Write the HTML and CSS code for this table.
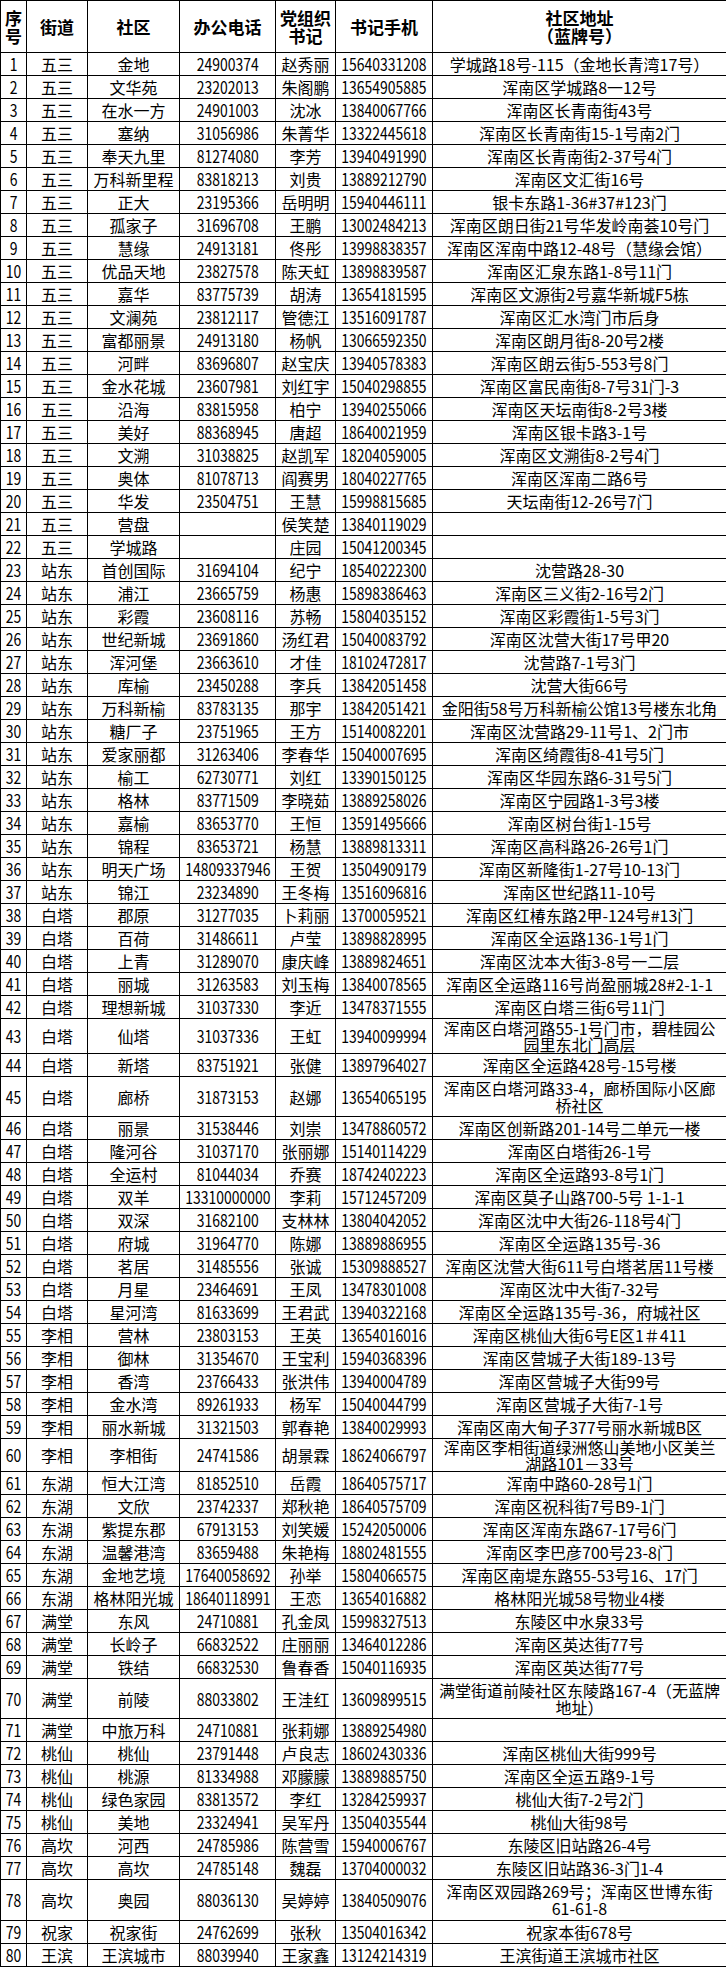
FILE: index.html
```html
<!DOCTYPE html>
<html lang="zh-CN">
<head>
<meta charset="utf-8">
<title>社区联系表</title>
<link rel="stylesheet" href="styles.css">
</head>
<body>
<table class="sheet">
<colgroup>
<col class="c-no"><col class="c-street"><col class="c-comm"><col class="c-tel"><col class="c-sec"><col class="c-mob"><col class="c-addr">
</colgroup>
<thead>
<tr><th>序<br>号</th><th>街道</th><th>社区</th><th>办公电话</th><th>党组织<br>书记</th><th>书记手机</th><th>社区地址<br>（蓝牌号）</th></tr>
</thead>
<tbody>
<tr><td class="n"><span>1</span></td><td>五三</td><td>金地</td><td class="n"><span>24900374</span></td><td>赵秀丽</td><td class="n"><span>15640331208</span></td><td>学城路18号-115（金地长青湾17号）</td></tr>
<tr><td class="n"><span>2</span></td><td>五三</td><td>文华苑</td><td class="n"><span>23202013</span></td><td>朱阁鹏</td><td class="n"><span>13654905885</span></td><td>浑南区学城路8一12号</td></tr>
<tr><td class="n"><span>3</span></td><td>五三</td><td>在水一方</td><td class="n"><span>24901003</span></td><td>沈冰</td><td class="n"><span>13840067766</span></td><td>浑南区长青南街43号</td></tr>
<tr><td class="n"><span>4</span></td><td>五三</td><td>塞纳</td><td class="n"><span>31056986</span></td><td>朱菁华</td><td class="n"><span>13322445618</span></td><td>浑南区长青南街15-1号南2门</td></tr>
<tr><td class="n"><span>5</span></td><td>五三</td><td>奉天九里</td><td class="n"><span>81274080</span></td><td>李芳</td><td class="n"><span>13940491990</span></td><td>浑南区长青南街2-37号4门</td></tr>
<tr><td class="n"><span>6</span></td><td>五三</td><td>万科新里程</td><td class="n"><span>83818213</span></td><td>刘贵</td><td class="n"><span>13889212790</span></td><td>浑南区文汇街16号</td></tr>
<tr><td class="n"><span>7</span></td><td>五三</td><td>正大</td><td class="n"><span>23195366</span></td><td>岳明明</td><td class="n"><span>15940446111</span></td><td>银卡东路1-36#37#123门</td></tr>
<tr><td class="n"><span>8</span></td><td>五三</td><td>孤家子</td><td class="n"><span>31696708</span></td><td>王鹏</td><td class="n"><span>13002484213</span></td><td>浑南区朗日街21号华发岭南荟10号门</td></tr>
<tr><td class="n"><span>9</span></td><td>五三</td><td>慧缘</td><td class="n"><span>24913181</span></td><td>佟彤</td><td class="n"><span>13998838357</span></td><td>浑南区浑南中路12-48号（慧缘会馆）</td></tr>
<tr><td class="n"><span>10</span></td><td>五三</td><td>优品天地</td><td class="n"><span>23827578</span></td><td>陈天虹</td><td class="n"><span>13898839587</span></td><td>浑南区汇泉东路1-8号11门</td></tr>
<tr><td class="n"><span>11</span></td><td>五三</td><td>嘉华</td><td class="n"><span>83775739</span></td><td>胡涛</td><td class="n"><span>13654181595</span></td><td>浑南区文源街2号嘉华新城F5栋</td></tr>
<tr><td class="n"><span>12</span></td><td>五三</td><td>文澜苑</td><td class="n"><span>23812117</span></td><td>管德江</td><td class="n"><span>13516091787</span></td><td>浑南区汇水湾门市后身</td></tr>
<tr><td class="n"><span>13</span></td><td>五三</td><td>富都丽景</td><td class="n"><span>24913180</span></td><td>杨帆</td><td class="n"><span>13066592350</span></td><td>浑南区朗月街8-20号2楼</td></tr>
<tr><td class="n"><span>14</span></td><td>五三</td><td>河畔</td><td class="n"><span>83696807</span></td><td>赵宝庆</td><td class="n"><span>13940578383</span></td><td>浑南区朗云街5-553号8门</td></tr>
<tr><td class="n"><span>15</span></td><td>五三</td><td>金水花城</td><td class="n"><span>23607981</span></td><td>刘红宇</td><td class="n"><span>15040298855</span></td><td>浑南区富民南街8-7号31门-3</td></tr>
<tr><td class="n"><span>16</span></td><td>五三</td><td>沿海</td><td class="n"><span>83815958</span></td><td>柏宁</td><td class="n"><span>13940255066</span></td><td>浑南区天坛南街8-2号3楼</td></tr>
<tr><td class="n"><span>17</span></td><td>五三</td><td>美好</td><td class="n"><span>88368945</span></td><td>唐超</td><td class="n"><span>18640021959</span></td><td>浑南区银卡路3-1号</td></tr>
<tr><td class="n"><span>18</span></td><td>五三</td><td>文溯</td><td class="n"><span>31038825</span></td><td>赵凯军</td><td class="n"><span>18204059005</span></td><td>浑南区文溯街8-2号4门</td></tr>
<tr><td class="n"><span>19</span></td><td>五三</td><td>奥体</td><td class="n"><span>81078713</span></td><td>阎赛男</td><td class="n"><span>18040227765</span></td><td>浑南区浑南二路6号</td></tr>
<tr><td class="n"><span>20</span></td><td>五三</td><td>华发</td><td class="n"><span>23504751</span></td><td>王慧</td><td class="n"><span>15998815685</span></td><td>天坛南街12-26号7门</td></tr>
<tr><td class="n"><span>21</span></td><td>五三</td><td>营盘</td><td class="n"></td><td>侯笑楚</td><td class="n"><span>13840119029</span></td><td></td></tr>
<tr><td class="n"><span>22</span></td><td>五三</td><td>学城路</td><td class="n"></td><td>庄园</td><td class="n"><span>15041200345</span></td><td></td></tr>
<tr><td class="n"><span>23</span></td><td>站东</td><td>首创国际</td><td class="n"><span>31694104</span></td><td>纪宁</td><td class="n"><span>18540222300</span></td><td>沈营路28-30</td></tr>
<tr><td class="n"><span>24</span></td><td>站东</td><td>浦江</td><td class="n"><span>23665759</span></td><td>杨惠</td><td class="n"><span>15898386463</span></td><td>浑南区三义街2-16号2门</td></tr>
<tr><td class="n"><span>25</span></td><td>站东</td><td>彩霞</td><td class="n"><span>23608116</span></td><td>苏畅</td><td class="n"><span>15804035152</span></td><td>浑南区彩霞街1-5号3门</td></tr>
<tr><td class="n"><span>26</span></td><td>站东</td><td>世纪新城</td><td class="n"><span>23691860</span></td><td>汤红君</td><td class="n"><span>15040083792</span></td><td>浑南区沈营大街17号甲20</td></tr>
<tr><td class="n"><span>27</span></td><td>站东</td><td>浑河堡</td><td class="n"><span>23663610</span></td><td>才佳</td><td class="n"><span>18102472817</span></td><td>沈营路7-1号3门</td></tr>
<tr><td class="n"><span>28</span></td><td>站东</td><td>库榆</td><td class="n"><span>23450288</span></td><td>李兵</td><td class="n"><span>13842051458</span></td><td>沈营大街66号</td></tr>
<tr><td class="n"><span>29</span></td><td>站东</td><td>万科新榆</td><td class="n"><span>83783135</span></td><td>那宇</td><td class="n"><span>13842051421</span></td><td>金阳街58号万科新榆公馆13号楼东北角</td></tr>
<tr><td class="n"><span>30</span></td><td>站东</td><td>糖厂子</td><td class="n"><span>23751965</span></td><td>王方</td><td class="n"><span>15140082201</span></td><td>浑南区沈营路29-11号1、2门市</td></tr>
<tr><td class="n"><span>31</span></td><td>站东</td><td>爱家丽都</td><td class="n"><span>31263406</span></td><td>李春华</td><td class="n"><span>15040007695</span></td><td>浑南区绮霞街8-41号5门</td></tr>
<tr><td class="n"><span>32</span></td><td>站东</td><td>榆工</td><td class="n"><span>62730771</span></td><td>刘红</td><td class="n"><span>13390150125</span></td><td>浑南区华园东路6-31号5门</td></tr>
<tr><td class="n"><span>33</span></td><td>站东</td><td>格林</td><td class="n"><span>83771509</span></td><td>李晓茹</td><td class="n"><span>13889258026</span></td><td>浑南区宁园路1-3号3楼</td></tr>
<tr><td class="n"><span>34</span></td><td>站东</td><td>嘉榆</td><td class="n"><span>83653770</span></td><td>王恒</td><td class="n"><span>13591495666</span></td><td>浑南区树台街1-15号</td></tr>
<tr><td class="n"><span>35</span></td><td>站东</td><td>锦程</td><td class="n"><span>83653721</span></td><td>杨慧</td><td class="n"><span>13889813311</span></td><td>浑南区高科路26-26号1门</td></tr>
<tr><td class="n"><span>36</span></td><td>站东</td><td>明天广场</td><td class="n"><span>14809337946</span></td><td>王贺</td><td class="n"><span>13504909179</span></td><td>浑南区新隆街1-27号10-13门</td></tr>
<tr><td class="n"><span>37</span></td><td>站东</td><td>锦江</td><td class="n"><span>23234890</span></td><td>王冬梅</td><td class="n"><span>13516096816</span></td><td>浑南区世纪路11-10号</td></tr>
<tr><td class="n"><span>38</span></td><td>白塔</td><td>郡原</td><td class="n"><span>31277035</span></td><td>卜莉丽</td><td class="n"><span>13700059521</span></td><td>浑南区红椿东路2甲-124号#13门</td></tr>
<tr><td class="n"><span>39</span></td><td>白塔</td><td>百荷</td><td class="n"><span>31486611</span></td><td>卢莹</td><td class="n"><span>13898828995</span></td><td>浑南区全运路136-1号1门</td></tr>
<tr><td class="n"><span>40</span></td><td>白塔</td><td>上青</td><td class="n"><span>31289070</span></td><td>康庆峰</td><td class="n"><span>13889824651</span></td><td>浑南区沈本大街3-8号一二层</td></tr>
<tr><td class="n"><span>41</span></td><td>白塔</td><td>丽城</td><td class="n"><span>31263583</span></td><td>刘玉梅</td><td class="n"><span>13840078565</span></td><td>浑南区全运路116号尚盈丽城28#2-1-1</td></tr>
<tr><td class="n"><span>42</span></td><td>白塔</td><td>理想新城</td><td class="n"><span>31037330</span></td><td>李近</td><td class="n"><span>13478371555</span></td><td>浑南区白塔三街6号11门</td></tr>
<tr class="h35"><td class="n"><span>43</span></td><td>白塔</td><td>仙塔</td><td class="n"><span>31037336</span></td><td>王虹</td><td class="n"><span>13940099994</span></td><td><div class="wrap"><span>浑南区白塔河路55-1号门市，碧桂园公<br>园里东北门高层</span></div></td></tr>
<tr><td class="n"><span>44</span></td><td>白塔</td><td>新塔</td><td class="n"><span>83751921</span></td><td>张健</td><td class="n"><span>13897964027</span></td><td>浑南区全运路428号-15号楼</td></tr>
<tr class="h40"><td class="n"><span>45</span></td><td>白塔</td><td>廊桥</td><td class="n"><span>31873153</span></td><td>赵娜</td><td class="n"><span>13654065195</span></td><td><div class="wrap"><span>浑南区白塔河路33-4，廊桥国际小区廊<br>桥社区</span></div></td></tr>
<tr><td class="n"><span>46</span></td><td>白塔</td><td>丽景</td><td class="n"><span>31538446</span></td><td>刘崇</td><td class="n"><span>13478860572</span></td><td>浑南区创新路201-14号二单元一楼</td></tr>
<tr><td class="n"><span>47</span></td><td>白塔</td><td>隆河谷</td><td class="n"><span>31037170</span></td><td>张丽娜</td><td class="n"><span>15140114229</span></td><td>浑南区白塔街26-1号</td></tr>
<tr><td class="n"><span>48</span></td><td>白塔</td><td>全运村</td><td class="n"><span>81044034</span></td><td>乔赛</td><td class="n"><span>18742402223</span></td><td>浑南区全运路93-8号1门</td></tr>
<tr><td class="n"><span>49</span></td><td>白塔</td><td>双羊</td><td class="n"><span>13310000000</span></td><td>李莉</td><td class="n"><span>15712457209</span></td><td>浑南区莫子山路700-5号 1-1-1</td></tr>
<tr><td class="n"><span>50</span></td><td>白塔</td><td>双深</td><td class="n"><span>31682100</span></td><td>支林林</td><td class="n"><span>13804042052</span></td><td>浑南区沈中大街26-118号4门</td></tr>
<tr><td class="n"><span>51</span></td><td>白塔</td><td>府城</td><td class="n"><span>31964770</span></td><td>陈娜</td><td class="n"><span>13889886955</span></td><td>浑南区全运路135号-36</td></tr>
<tr><td class="n"><span>52</span></td><td>白塔</td><td>茗居</td><td class="n"><span>31485556</span></td><td>张诚</td><td class="n"><span>15309888527</span></td><td>浑南区沈营大街611号白塔茗居11号楼</td></tr>
<tr><td class="n"><span>53</span></td><td>白塔</td><td>月星</td><td class="n"><span>23464691</span></td><td>王凤</td><td class="n"><span>13478301008</span></td><td>浑南区沈中大街7-32号</td></tr>
<tr><td class="n"><span>54</span></td><td>白塔</td><td>星河湾</td><td class="n"><span>81633699</span></td><td>王君武</td><td class="n"><span>13940322168</span></td><td>浑南区全运路135号-36，府城社区</td></tr>
<tr><td class="n"><span>55</span></td><td>李相</td><td>营林</td><td class="n"><span>23803153</span></td><td>王英</td><td class="n"><span>13654016016</span></td><td>浑南区桃仙大街6号E区1＃411</td></tr>
<tr><td class="n"><span>56</span></td><td>李相</td><td>御林</td><td class="n"><span>31354670</span></td><td>王宝利</td><td class="n"><span>15940368396</span></td><td>浑南区营城子大街189-13号</td></tr>
<tr><td class="n"><span>57</span></td><td>李相</td><td>香湾</td><td class="n"><span>23766433</span></td><td>张洪伟</td><td class="n"><span>13940004789</span></td><td>浑南区营城子大街99号</td></tr>
<tr><td class="n"><span>58</span></td><td>李相</td><td>金水湾</td><td class="n"><span>89261933</span></td><td>杨军</td><td class="n"><span>15040044799</span></td><td>浑南区营城子大街7-1号</td></tr>
<tr><td class="n"><span>59</span></td><td>李相</td><td>丽水新城</td><td class="n"><span>31321503</span></td><td>郭春艳</td><td class="n"><span>13840029993</span></td><td>浑南区南大甸子377号丽水新城B区</td></tr>
<tr class="h33"><td class="n"><span>60</span></td><td>李相</td><td>李相街</td><td class="n"><span>24741586</span></td><td>胡景霖</td><td class="n"><span>18624066797</span></td><td><div class="wrap"><span>浑南区李相街道绿洲悠山美地小区美兰<br>湖路101－33号</span></div></td></tr>
<tr><td class="n"><span>61</span></td><td>东湖</td><td>恒大江湾</td><td class="n"><span>81852510</span></td><td>岳霞</td><td class="n"><span>18640575717</span></td><td>浑南中路60-28号1门</td></tr>
<tr><td class="n"><span>62</span></td><td>东湖</td><td>文欣</td><td class="n"><span>23742337</span></td><td>郑秋艳</td><td class="n"><span>18640575709</span></td><td>浑南区祝科街7号B9-1门</td></tr>
<tr><td class="n"><span>63</span></td><td>东湖</td><td>紫提东郡</td><td class="n"><span>67913153</span></td><td>刘笑媛</td><td class="n"><span>15242050006</span></td><td>浑南区浑南东路67-17号6门</td></tr>
<tr><td class="n"><span>64</span></td><td>东湖</td><td>温馨港湾</td><td class="n"><span>83659488</span></td><td>朱艳梅</td><td class="n"><span>18802481555</span></td><td>浑南区李巴彦700号23-8门</td></tr>
<tr><td class="n"><span>65</span></td><td>东湖</td><td>金地艺境</td><td class="n"><span>17640058692</span></td><td>孙举</td><td class="n"><span>15804066575</span></td><td>浑南区南堤东路55-53号16、17门</td></tr>
<tr><td class="n"><span>66</span></td><td>东湖</td><td>格林阳光城</td><td class="n"><span>18640118991</span></td><td>王恋</td><td class="n"><span>13654016882</span></td><td>格林阳光城58号物业4楼</td></tr>
<tr><td class="n"><span>67</span></td><td>满堂</td><td>东风</td><td class="n"><span>24710881</span></td><td>孔金凤</td><td class="n"><span>15998327513</span></td><td>东陵区中水泉33号</td></tr>
<tr><td class="n"><span>68</span></td><td>满堂</td><td>长岭子</td><td class="n"><span>66832522</span></td><td>庄丽丽</td><td class="n"><span>13464012286</span></td><td>浑南区英达街77号</td></tr>
<tr><td class="n"><span>69</span></td><td>满堂</td><td>铁结</td><td class="n"><span>66832530</span></td><td>鲁春香</td><td class="n"><span>15040116935</span></td><td>浑南区英达街77号</td></tr>
<tr class="h40"><td class="n"><span>70</span></td><td>满堂</td><td>前陵</td><td class="n"><span>88033802</span></td><td>王洼红</td><td class="n"><span>13609899515</span></td><td><div class="wrap"><span>满堂街道前陵社区东陵路167-4（无蓝牌<br>地址）</span></div></td></tr>
<tr><td class="n"><span>71</span></td><td>满堂</td><td>中旅万科</td><td class="n"><span>24710881</span></td><td>张莉娜</td><td class="n"><span>13889254980</span></td><td></td></tr>
<tr><td class="n"><span>72</span></td><td>桃仙</td><td>桃仙</td><td class="n"><span>23791448</span></td><td>卢良志</td><td class="n"><span>18602430336</span></td><td>浑南区桃仙大街999号</td></tr>
<tr><td class="n"><span>73</span></td><td>桃仙</td><td>桃源</td><td class="n"><span>81334988</span></td><td>邓朦朦</td><td class="n"><span>13889885750</span></td><td>浑南区全运五路9-1号</td></tr>
<tr><td class="n"><span>74</span></td><td>桃仙</td><td>绿色家园</td><td class="n"><span>83813572</span></td><td>李红</td><td class="n"><span>13284259937</span></td><td>桃仙大街7-2号2门</td></tr>
<tr><td class="n"><span>75</span></td><td>桃仙</td><td>美地</td><td class="n"><span>23324941</span></td><td>吴军丹</td><td class="n"><span>13504035544</span></td><td>桃仙大街98号</td></tr>
<tr><td class="n"><span>76</span></td><td>高坎</td><td>河西</td><td class="n"><span>24785986</span></td><td>陈营雪</td><td class="n"><span>15940006767</span></td><td>东陵区旧站路26-4号</td></tr>
<tr><td class="n"><span>77</span></td><td>高坎</td><td>高坎</td><td class="n"><span>24785148</span></td><td>魏磊</td><td class="n"><span>13704000032</span></td><td>东陵区旧站路36-3门1-4</td></tr>
<tr class="h41"><td class="n"><span>78</span></td><td>高坎</td><td>奥园</td><td class="n"><span>88036130</span></td><td>吴婷婷</td><td class="n"><span>13840509076</span></td><td><div class="wrap"><span>浑南区双园路269号；浑南区世博东街<br>61-61-8</span></div></td></tr>
<tr><td class="n"><span>79</span></td><td>祝家</td><td>祝家街</td><td class="n"><span>24762699</span></td><td>张秋</td><td class="n"><span>13504016342</span></td><td>祝家本街678号</td></tr>
<tr><td class="n"><span>80</span></td><td>王滨</td><td>王滨城市</td><td class="n"><span>88039940</span></td><td>王家鑫</td><td class="n"><span>13124214319</span></td><td>王滨街道王滨城市社区</td></tr>
</tbody>
</table>
</body>
</html>
```

FILE: styles.css
```css
html, body {
  margin: 0;
  padding: 0;
  background: #ffffff;
}

.sheet {
  border-collapse: collapse;
  table-layout: fixed;
  width: 726px;
  font-family: "Noto Sans CJK SC", "Liberation Sans", sans-serif;
  font-size: 16px;
  color: #000000;
}

.c-no { width: 26px; }
.c-street { width: 61px; }
.c-comm { width: 92px; }
.c-tel { width: 96px; }
.c-sec { width: 60px; }
.c-mob { width: 97px; }
.c-addr { width: 294px; }

.sheet th,
.sheet td {
  border: 1px solid #000000;
  padding: 0;
  text-align: center;
  vertical-align: middle;
  white-space: nowrap;
}

.sheet th {
  height: 51px;
  font-size: 17px;
  font-weight: bold;
  line-height: 18px;
}

.sheet td {
  height: 22px;
  line-height: 20px;
}

/* numeric cells: tall, narrow figures */
.sheet td.n {
  font-size: 17px;
}

.sheet td.n span {
  display: inline-block;
  margin: 0 -10px;
  transform: scaleX(0.82);
}

.sheet tr.h33 td { height: 32px; }
.sheet tr.h35 td { height: 34px; }
.sheet tr.h40 td { height: 39px; }
.sheet tr.h41 td { height: 40px; }

.wrap {
  display: flex;
  flex-direction: column;
  justify-content: center;
  line-height: 16px;
  white-space: nowrap;
}

.h40 .wrap,
.h41 .wrap { line-height: 17px; }
```
